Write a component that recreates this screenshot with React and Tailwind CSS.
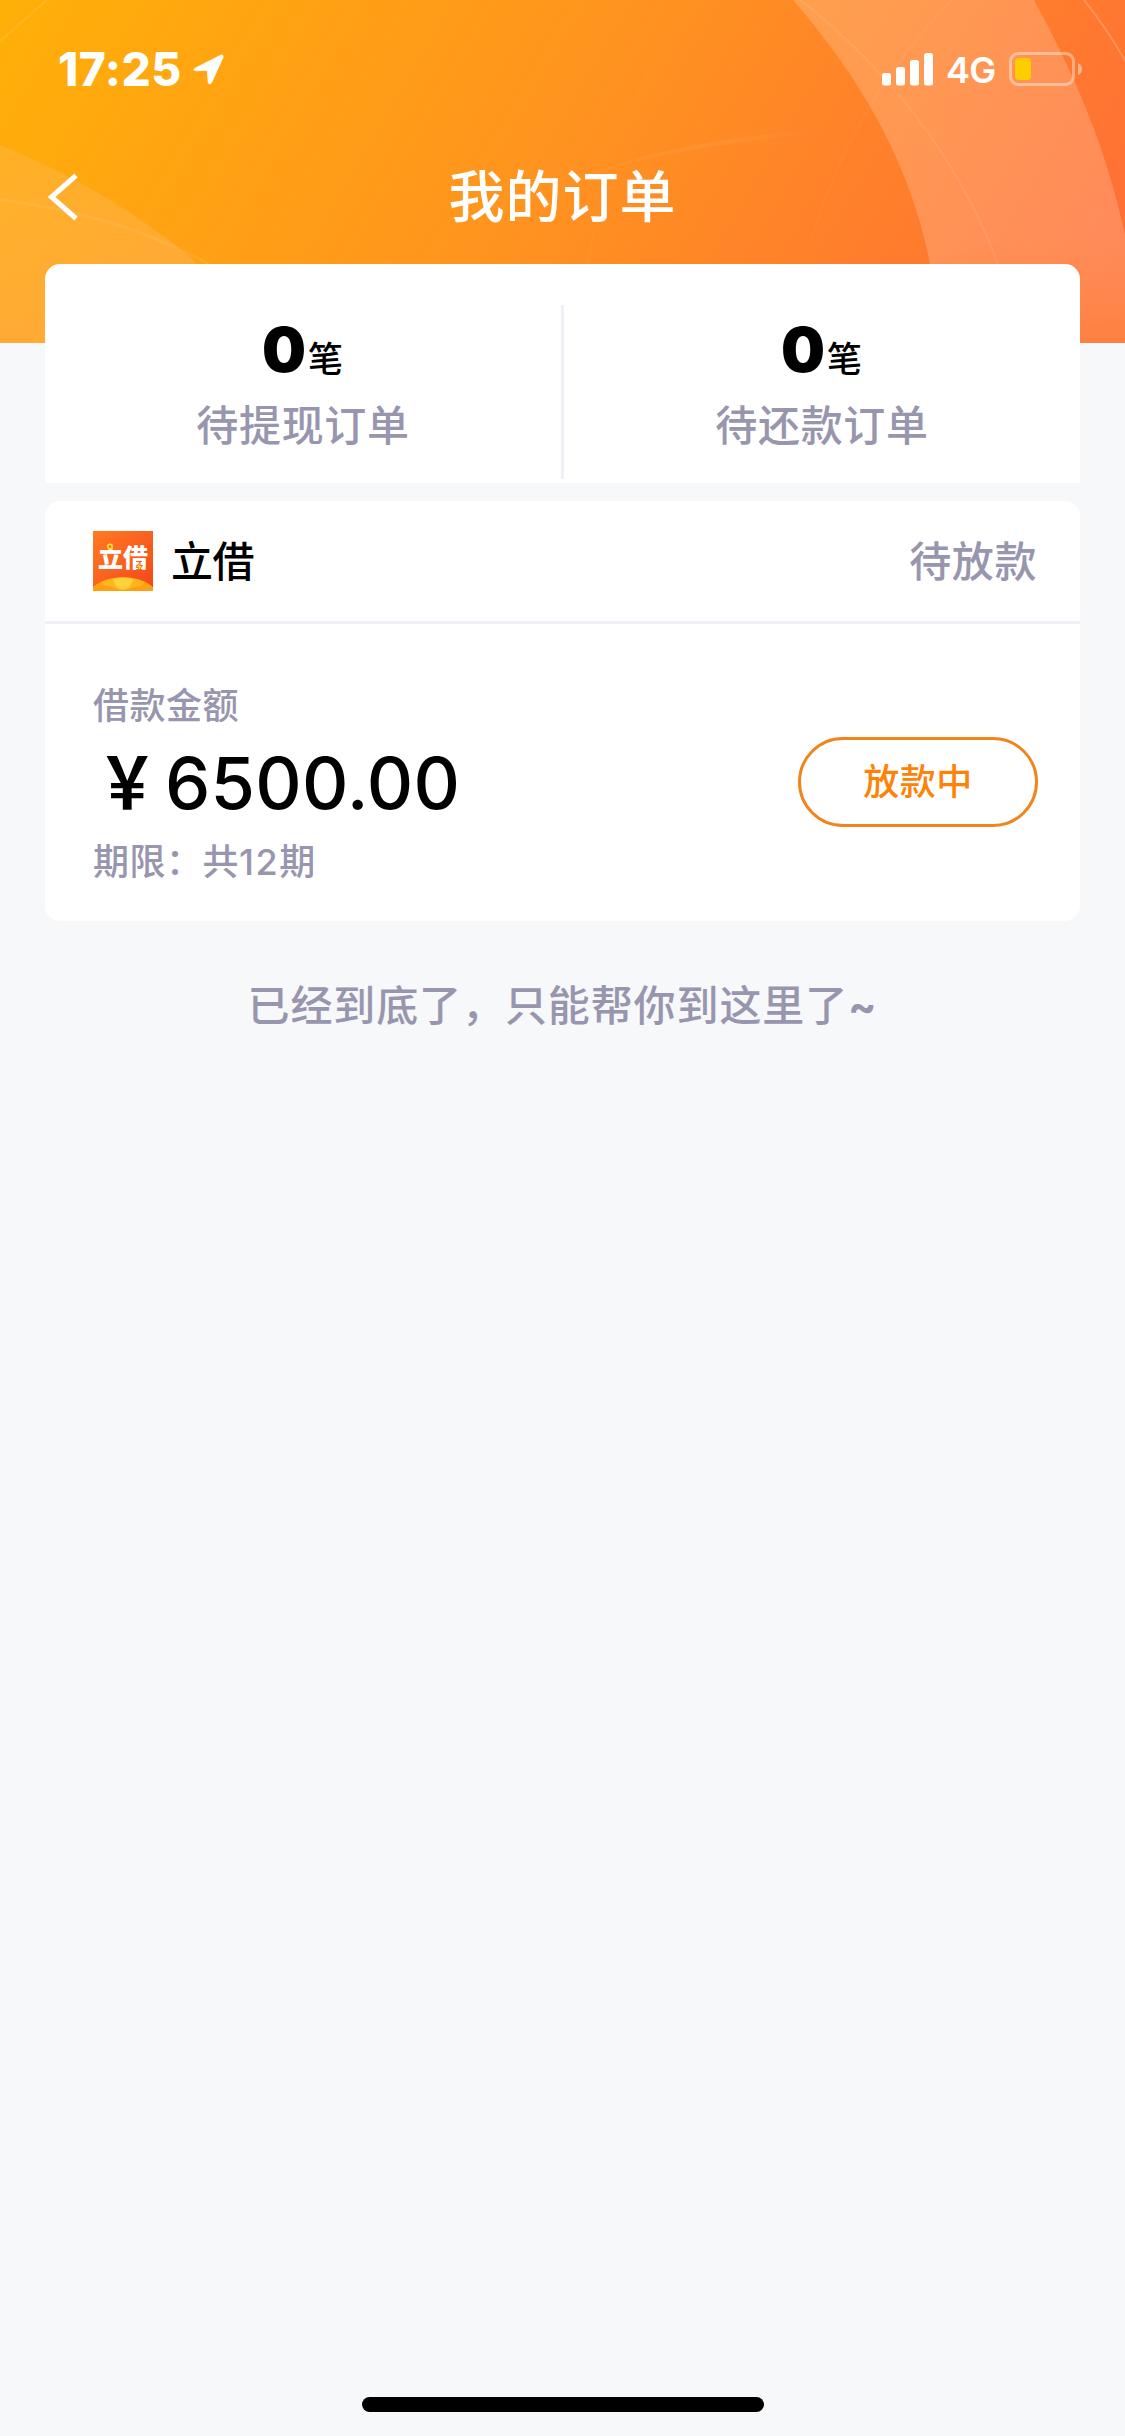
function HeaderArt() {
  return (
    <svg className="absolute inset-0 h-full w-full" viewBox="0 0 1125 343" preserveAspectRatio="none" aria-hidden="true">
      <defs>
        <linearGradient id="base" gradientUnits="userSpaceOnUse" x1="0" y1="0" x2="960" y2="560">
          <stop offset="0" stopColor="#ffb008" />
          <stop offset="0.5" stopColor="#ff931f" />
          <stop offset="1" stopColor="#ff6e36" />
        </linearGradient>
        <linearGradient id="arc" x1="0" y1="0" x2="1" y2="0">
          <stop offset="0" stopColor="#fff" stopOpacity="0.02" />
          <stop offset="0.5" stopColor="#fff" stopOpacity="0.06" />
          <stop offset="1" stopColor="#fff" stopOpacity="0" />
        </linearGradient>
        <linearGradient id="warm" x1="0" y1="0" x2="0" y2="1">
          <stop offset="0" stopColor="#ff8a40" stopOpacity="0" />
          <stop offset="1" stopColor="#ff7d3a" stopOpacity="0.8" />
        </linearGradient>
        <linearGradient id="patch" x1="0" y1="0" x2="0" y2="1">
          <stop offset="0" stopColor="#ffc070" stopOpacity="0.25" />
          <stop offset="1" stopColor="#ffae50" stopOpacity="0.55" />
        </linearGradient>
      </defs>
      <rect width="1125" height="343" fill="url(#base)" />
      <path d="M0 145Q115 192 195 262L260 343H0Z" fill="url(#patch)" />
      <path d="M793 0C866 84 912 170 930 264L940 343H1125V235C1107 150 1075 75 1034 0Z" fill="#fff" fillOpacity="0.19" />
      <path d="M930 264L940 343H1125V240C1060 225 990 240 930 264Z" fill="url(#warm)" />
      <path d="M556 186C630 155 730 133 850 128C800 138 720 140 630 163Z" fill="url(#arc)" />
      <g fill="none" stroke="#fff" strokeWidth="2">
        <path d="M0 41L47 0" strokeOpacity="0.1" />
        <path d="M0 200Q120 214 212 266" strokeOpacity="0.07" strokeWidth="3" />
        <path d="M800 0Q940 110 998 264" strokeOpacity="0.08" />
        <path d="M1084 0Q1108 30 1127 64" strokeOpacity="0.2" />
        <path d="M952 0Q850 105 812 240" strokeOpacity="0.03" />
        <path d="M650 70Q605 150 588 264" strokeOpacity="0.02" />
      </g>
    </svg>
  );
}

function StatusBar() {
  return (
    <div className="flex h-[132px] items-start justify-between pl-[58px] pr-[42px] pt-[45px] text-white">
      <div className="flex h-12 items-center">
        <span className="w-[125px] whitespace-nowrap text-[46px] font-extrabold leading-[48px] tracking-[0.5px]">17:25</span>
        <svg className="ml-[10px] h-[31px] w-[31px]" viewBox="0 0 31 31" aria-hidden="true">
          <path d="M2 14.2L27.5 1.3Q30.6 0.2 30 3.4L18.5 28.8Q17.2 31 15.3 29.2L14.4 17.6Q14.3 16.4 13 16.3L2.2 16.8Q-0.8 15.9 2 14.2Z" fill="currentColor" stroke="currentColor" strokeWidth="0.800" />
        </svg>
      </div>
      <div className="flex h-12 items-center">
        <svg className="h-[34px] w-[52px]" viewBox="0 0 52 34" fill="currentColor" aria-hidden="true">
          <rect x="0" y="21" width="9" height="12.5" rx="2.5" />
          <rect x="14" y="15" width="9" height="18.5" rx="2.5" />
          <rect x="28" y="8" width="9" height="25.5" rx="2.5" />
          <rect x="42" y="1" width="9" height="32.5" rx="2.5" />
        </svg>
        <span className="ml-[12px] w-[52px] whitespace-nowrap pt-[2px] text-[36px] font-semibold leading-[44px] tracking-[-0.7px]">4G</span>
        <svg className="ml-[11px] h-[34px] w-[74px]" viewBox="0 0 74 34" aria-hidden="true">
          <rect x="1.5" y="1.5" width="63" height="31" rx="8" fill="none" stroke="#fff" strokeOpacity="0.4" strokeWidth="3" />
          <rect x="6" y="6" width="16" height="22" rx="4" fill="#ffcc00" />
          <path d="M69 11Q73 13 73 17Q73 21 69 23Z" fill="#fff" fillOpacity="0.45" />
        </svg>
      </div>
    </div>
  );
}

function AppLogo() {
  return (
    <div className="relative h-[60px] w-[60px] overflow-hidden bg-gradient-to-br from-[#ff7a22] to-[#f4431c]">
      <span className="absolute left-[5px] top-[11px] whitespace-nowrap text-[25px] font-black leading-[32px] text-white">立借</span>
      <svg className="absolute inset-0 h-full w-full" viewBox="0 0 60 60" aria-hidden="true">
        <path d="M0 56Q8 49 20 47Q30 45 40 47Q52 49 60 56V60H0Z" fill="#ff9f14" />
        <path d="M8 51Q30 43 52 51Q50 56 40 56Q36 59 30 59Q24 59 20 56Q10 56 8 51Z" fill="#fdb71c" />
        <path d="M20 48Q30 45 40 48Q38 58 30 58.500Q22 58 20 48Z" fill="#ffd23a" />
        <circle cx="17" cy="15.500" r="2.200" fill="#f4622a" stroke="#ffd92e" strokeWidth="1.800" />
        <path d="M47.500 30L43 36.500H45.800L45 41L49.500 34.500H46.800Z" fill="#ffd92e" stroke="#e8551c" strokeWidth="0.700" />
      </svg>
    </div>
  );
}

function Stat({ count, label }) {
  return (
    <div className="flex flex-1 flex-col items-center pt-[51px]">
      <div className="flex h-[70px] items-baseline text-black">
        <span className="text-[62px] font-black leading-[70px]">{count}</span>
        <span className="ml-[2px] mr-[1px] text-[35px] font-medium">笔</span>
      </div>
      <div className="mt-[13px] text-[42px] font-medium leading-[56px] tracking-[0.7px] text-[#9796ae]">{label}</div>
    </div>
  );
}

export default function App() {
  return (
    <div className="flex h-[2436px] w-[1125px] flex-col overflow-hidden bg-[#f7f8fa] font-[Inter,'Noto_Sans_CJK_SC',sans-serif]">
      <header className="relative h-[343px] shrink-0">
        <HeaderArt />
        <div className="relative">
          <StatusBar />
          <div className="grid h-[129px] grid-cols-[120px_1fr_120px] items-center text-white">
            <svg className="ml-[46px] h-[48px] w-[34px]" viewBox="0 0 34 48" fill="none" aria-hidden="true">
              <path d="M30 2.500L5.500 24L30 45.500" stroke="currentColor" strokeWidth="5" />
            </svg>
            <h1 className="text-center text-[56px] font-medium leading-[72px] tracking-[1px]">我的订单</h1>
          </div>
        </div>
      </header>

      <main className="relative -mt-[79px] flex flex-1 flex-col px-[45px]">
        <section className="flex h-[219px] rounded-t-[15px] bg-white">
          <Stat count="0" label="待提现订单" />
          <div className="mt-[41px] h-[174px] w-[3px] bg-[#efeff5]" />
          <Stat count="0" label="待还款订单" />
        </section>

        <section className="mt-[18px] flex h-[420px] flex-col rounded-[15px] bg-white">
          <div className="flex h-[123px] shrink-0 items-center border-b-[3px] border-[#efeff5] pl-[48px] pr-[43px]">
            <AppLogo />
            <span className="ml-[18px] pt-px text-[42px] font-medium leading-[60px] tracking-[-0.5px] text-black">立借</span>
            <span className="ml-auto pt-px text-[42px] font-medium leading-[60px] tracking-[0.6px] text-[#9796ae]">待放款</span>
          </div>
          <div className="flex flex-1 items-start justify-between pl-[48px] pr-[42px]">
            <div className="pt-[57px]">
              <div className="text-[36px] font-medium leading-[50px] tracking-[0.5px] text-[#9796ae]">借款金额</div>
              <div className="mt-[8px] flex h-[88px] items-center whitespace-nowrap text-[72px] font-medium leading-[88px] text-black">
                <span className="ml-[4px] w-[68px] origin-left scale-x-[0.84] font-bold">￥</span>
                <span className="font-[550] tracking-[0.2px]">6500.00</span>
              </div>
              <div className="mt-[10px] text-[36px] font-medium leading-[50px] tracking-[0.5px] text-[#9796ae]">期限：共<span className="tracking-[1.6px]">12</span>期</div>
            </div>
            <button className="mt-[113px] h-[90px] w-[240px] rounded-full border-[3px] border-[#ef851c] text-[36px] font-medium leading-[50px] tracking-[0.5px] text-[#fd8208]">放款中</button>
          </div>
        </section>

        <p className="mt-[55px] whitespace-nowrap text-center text-[42px] font-medium leading-[60px] tracking-[0.9px] text-[#9796ae]">已经到底了，只能帮你到这里了<span className="font-bold">~</span></p>
        <div className="mx-auto mb-[24px] mt-auto h-[15px] w-[402px] rounded-full bg-black" />
      </main>
    </div>
  );
}
